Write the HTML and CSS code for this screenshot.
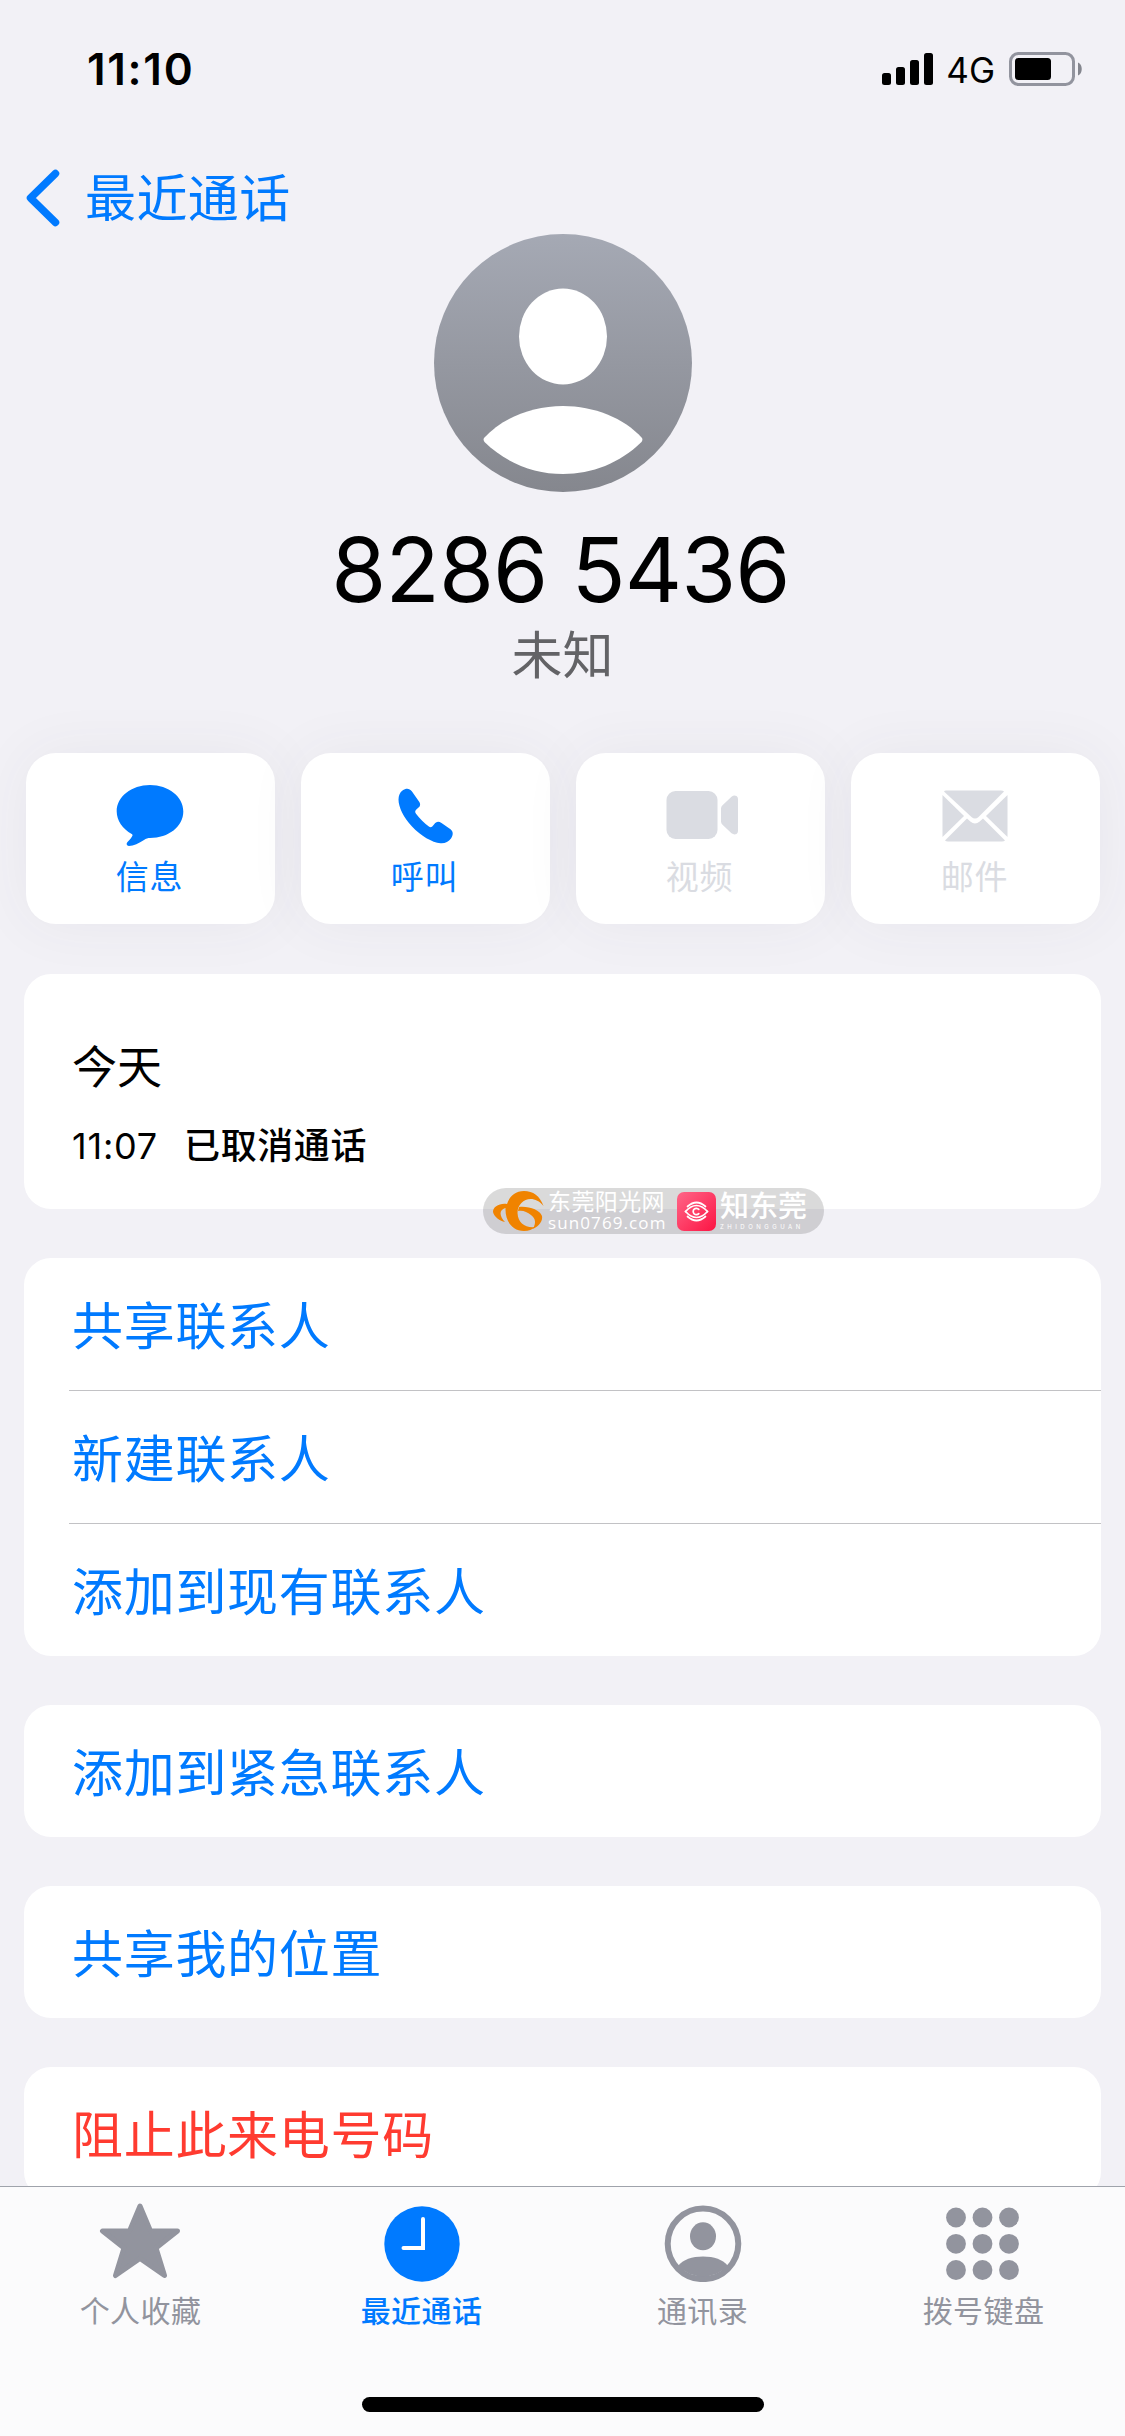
FILE: index.html
```html
<!DOCTYPE html>
<html lang="zh-CN">
<head>
  <meta charset="UTF-8">
  <meta name="viewport" content="width=device-width, initial-scale=1.0">
  <title>最近通话</title>
  <link rel="stylesheet" href="styles.css">
</head>
<body>
  <div class="phone">
    <header class="status-bar">
      <span class="time">11:10</span>
      <div class="status-icons">
        <svg class="signal" width="51" height="32" viewBox="0 0 51 32">
          <rect x="0" y="20" width="9" height="12" rx="2.5"/>
          <rect x="14" y="14" width="9" height="18" rx="2.5"/>
          <rect x="28" y="7" width="9" height="25" rx="2.5"/>
          <rect x="42" y="0" width="9" height="32" rx="2.5"/>
        </svg>
        <span class="network">4G</span>
        <svg class="battery" width="74" height="34" viewBox="0 0 74 34">
          <rect x="1.5" y="1.5" width="63" height="31" rx="8" fill="none" stroke="#92949e" stroke-width="3"/>
          <rect x="6" y="6" width="36" height="22" rx="3.5"/>
          <path d="M69 10.5c5 2 5 11 0 13z" fill="#84868e"/>
        </svg>
      </div>
    </header>

    <nav class="nav-bar">
      <svg width="34" height="58" viewBox="0 0 34 58">
        <path d="M29.5 4.5L4.5 29L29.5 53.5" fill="none" stroke="#007aff" stroke-width="7.5" stroke-linecap="round" stroke-linejoin="round"/>
      </svg>
      <a href="#">最近通话</a>
    </nav>

    <section class="profile">
      <svg class="avatar" width="258" height="258" viewBox="0 0 258 258">
        <defs>
          <linearGradient id="avatar-bg" x1="0" y1="0" x2="0" y2="1">
            <stop offset="0" stop-color="#a5a9b4"/>
            <stop offset="1" stop-color="#85878e"/>
          </linearGradient>
        </defs>
        <circle cx="129" cy="129" r="129" fill="url(#avatar-bg)"/>
        <ellipse cx="129" cy="102.5" rx="44" ry="48" fill="#fff"/>
        <path d="M50 204C68 184 98 172 129 172C160 172 190 184 208 204Q209 206 207.5 208C186 229 158 240 129 240C100 240 72 229 50.5 208Q49 206 50 204Z" fill="#fff"/>
      </svg>
      <h1>8286 5436</h1>
      <p>未知</p>
    </section>

    <section class="actions">
      <button class="action">
        <svg width="72" height="64" viewBox="0 0 72 64">
          <path d="M36 1C54.5 1 69.3 12.5 69.3 27.5S54.5 54 36 54C34 54 32 54.5 30 56C25 59.5 19.5 61.7 15 61.9C12.6 62 12 59.8 13.3 58.3C16 55.5 18 53 18.5 51.5C18.7 50.7 18.3 50.3 17.7 49.9C8.5 45 2.7 36.5 2.7 27.5C2.7 12.5 17.5 1 36 1Z"/>
        </svg>
        <span>信息</span>
      </button>
      <button class="action">
        <svg width="72" height="64" viewBox="0 0 72 64">
          <path d="M13.5 6.5C17 4 20.5 4.2 22.8 7.3L30 17.5C32 20.5 31.2 22.5 28.7 24.3C26 26.3 25.5 27.5 27 29.7C30.5 34.5 35.5 39.5 40.2 42.7C42 43.8 43.2 43 45 40.6C47.2 37.6 49.3 37 52.5 39L61.5 45.3C64.5 47.5 64.3 51.5 62 54.5C59.5 58 56 59.5 51.5 59.2C43 58.5 32 52 23 42.5C14.5 33.5 9.5 23 9.5 15.5C9.5 11.5 11 8.3 13.5 6.5Z"/>
        </svg>
        <span>呼叫</span>
      </button>
      <button class="action disabled">
        <svg width="76" height="64" viewBox="0 0 76 64">
          <rect x="4.5" y="7" width="51" height="48" rx="9"/>
          <path d="M59 24.5Q59 22.5 60.5 21.2L69.5 12.7Q72 10.8 74.5 12Q76 13 76 15V47Q76 49 74.5 50Q72 51.2 69.5 49.3L60.5 40.8Q59 39.5 59 37.5Z"/>
        </svg>
        <span>视频</span>
      </button>
      <button class="action disabled">
        <svg width="72" height="64" viewBox="0 0 72 64">
          <path d="M7 6.5H62Q64 6.5 65 7.5L39.5 33Q36 36 32.5 33L5 7.5Q5.5 6.5 7 6.5Z"/>
          <path d="M3.5 11L25 32L3.5 53Z"/>
          <path d="M68.5 11L47 32L68.5 53Z"/>
          <path d="M28 34.5L31.3 37.6Q36 41.5 40.7 37.6L44 34.5L66 56.5Q65 57.5 63 57.5H9Q7 57.5 6 56.5Z"/>
        </svg>
        <span>邮件</span>
      </button>
    </section>

    <main class="content">
      <section class="card history">
        <h2>今天</h2>
        <div class="call">
          <span class="call-time">11:07</span>
          <span class="call-type">已取消通话</span>
        </div>
      </section>

      <ul class="card list">
        <li>共享联系人</li>
        <li>新建联系人</li>
        <li>添加到现有联系人</li>
      </ul>
      <ul class="card list">
        <li>添加到紧急联系人</li>
      </ul>
      <ul class="card list">
        <li>共享我的位置</li>
      </ul>
      <ul class="card list">
        <li class="danger">阻止此来电号码</li>
      </ul>
    </main>

    <div class="watermark">
      <svg width="53" height="42" viewBox="0 0 53 42">
        <path d="M51.5 16C48 6 41 1 32 1C23 1 17 7 15 14C7 13 1 17 1 22C2 27 8 31 13 32C8 27 6 20 13.500 18C13 31 20 41 32 41C37 41 40 39.500 43 37C33 38 26 33 25.500 23C25.500 10 41 3 51.500 16Z" fill="#f08300"/>
        <path d="M27 17C37 16 48 20 50 26C51 31 47 36 41 39C44 33 44 29 39 25C35 22 31 20 26 21Z" fill="#f08300"/>
      </svg>
      <div class="brand sun">
        <b>东莞阳光网</b>
        <span>sun0769.com</span>
      </div>
      <svg class="eye" width="39" height="39" viewBox="0 0 39 39">
        <defs>
          <linearGradient id="eye-bg" x1="0" y1="0" x2="1" y2="1">
            <stop offset="0" stop-color="#ff6688"/>
            <stop offset="1" stop-color="#fc1443"/>
          </linearGradient>
        </defs>
        <rect width="39" height="39" rx="7" fill="url(#eye-bg)"/>
        <g fill="none" stroke="#fff" stroke-width="1.7" stroke-linecap="round">
          <path d="M10.5 14.5Q19.500 6.500 28.500 14.500"/>
          <path d="M8.500 19.500Q19.500 7.500 30.500 19.500"/>
          <path d="M8.500 19.500Q19.500 31.500 30.500 19.500"/>
          <path d="M10.500 24.500Q19.500 32.500 28.500 24.500"/>
          <path d="M21.800 17.400A3.200 3.200 0 1 0 21.800 21.600"/>
        </g>
      </svg>
      <div class="brand zhi">
        <b>知东莞</b>
        <span>ZHIDONGGUAN</span>
      </div>
    </div>

    <footer class="tab-bar">
      <div class="tabs">
        <a class="tab" href="#">
          <svg width="84" height="80" viewBox="1 1 84 80">
            <path d="M42 5L52.5 30H79.5L58 47L66.5 74.5L42 57.5L17.5 74.5L26 47L4.5 30H31.5Z" stroke="currentColor" stroke-width="5" stroke-linejoin="round"/>
          </svg>
          <span>个人收藏</span>
        </a>
        <a class="tab active" href="#">
          <svg width="84" height="80" viewBox="0 0 84 80">
            <circle cx="42" cy="42" r="37.7"/>
            <path d="M43 17V46H23.5" fill="none" stroke="#fff" stroke-width="4" stroke-linecap="round"/>
          </svg>
          <span>最近通话</span>
        </a>
        <a class="tab" href="#">
          <svg width="84" height="80" viewBox="0 0 84 80">
            <circle cx="42" cy="41.8" r="35.3" fill="none" stroke="currentColor" stroke-width="6"/>
            <ellipse cx="42" cy="34.3" rx="13" ry="14"/>
            <path d="M17 64C22 57.5 31 54.5 42 54.5S62 57.5 67 64A35.3 35.3 0 0 1 17 64Z"/>
          </svg>
          <span>通讯录</span>
        </a>
        <a class="tab" href="#">
          <svg width="84" height="80" viewBox="1.5 0 84 80">
            <circle cx="15.5" cy="15.5" r="9.9"/><circle cx="42" cy="15.5" r="9.9"/><circle cx="68.5" cy="15.5" r="9.9"/>
            <circle cx="15.5" cy="41.8" r="9.9"/><circle cx="42" cy="41.8" r="9.9"/><circle cx="68.5" cy="41.8" r="9.9"/>
            <circle cx="15.5" cy="68" r="9.9"/><circle cx="42" cy="68" r="9.9"/><circle cx="68.5" cy="68" r="9.9"/>
          </svg>
          <span>拨号键盘</span>
        </a>
      </div>
      <div class="home-indicator"></div>
    </footer>
  </div>
</body>
</html>
```
FILE: styles.css
```css
* {
  box-sizing: border-box;
  margin: 0;
  padding: 0;
}

body {
  font-family: Inter, "Noto Sans CJK SC", sans-serif;
  background: #f2f1f6;
  color: #000;
}

a {
  color: inherit;
  text-decoration: none;
}

svg {
  display: block;
  flex: none;
}

.phone {
  position: relative;
  width: 1125px;
  height: 2436px;
  overflow: hidden;
}

/* status bar */
.status-bar {
  display: flex;
  justify-content: space-between;
  height: 138px;
  padding: 0 42px 0 87px;
}
.time {
  padding-top: 41px;
  font-size: 44px;
  font-weight: 600;
  line-height: 56px;
  letter-spacing: 1.7px;
}
.status-icons {
  display: flex;
  align-items: center;
  height: 138px;
}
.network {
  margin: 2px 14px 0 13px;
  font-size: 35px;
  line-height: 40px;
}

.nav-bar {
  display: flex;
  align-items: center;
  height: 96px;
  padding-left: 26px;
  color: #007aff;
}
.nav-bar svg {
  margin-top: 24px;
}
.nav-bar a {
  margin: 26px 0 0 25px;
  font-size: 51px;
  line-height: 60px;
  letter-spacing: 0.4px;
}

/* avatar and number */
.profile {
  display: flex;
  flex-direction: column;
  align-items: center;
  height: 519px;
}
.profile h1 {
  margin: 24px 0 0 -4px;
  font-size: 89px;
  font-weight: 400;
  line-height: 108px;
  letter-spacing: -0.9px;
}
.profile p {
  margin-top: 2px;
  font-size: 51px;
  line-height: 60px;
  color: #636366;
}

.actions {
  display: grid;
  grid-template-columns: repeat(4, 249px);
  gap: 26px;
  padding-left: 25.5px;
}
.action {
  display: flex;
  flex-direction: column;
  align-items: center;
  height: 171px;
  padding-top: 31px;
  border: none;
  border-radius: 30px;
  background: #fff;
  box-shadow: 0 0 60px rgba(60, 60, 90, 0.06);
  font-family: inherit;
  font-size: 33px;
  color: #007aff;
}
.action svg {
  fill: currentColor;
}
.action span {
  margin: 7px 1px 0 0;
  line-height: 44px;
  letter-spacing: 0.8px;
}
.action.disabled {
  color: #dadce2;
}

/* cards */
.content {
  display: flex;
  flex-direction: column;
  gap: 49px;
  padding: 50px 24px 0;
}
.card {
  border-radius: 27px;
  background: #fff;
}
.history {
  height: 235px;
  padding: 64px 48px 0;
}
.history h2 {
  font-size: 45px;
  font-weight: 400;
  line-height: 60px;
}
.call {
  display: flex;
  gap: 26px;
  margin-top: 24px;
  font-size: 36px;
  line-height: 48px;
}
.call-time {
  letter-spacing: 0.8px;
}
.call-type {
  font-weight: 500;
  letter-spacing: 0.6px;
}

.list {
  padding-left: 45px;
  list-style: none;
}
.list li {
  height: 132px;
  padding: 3px 0 0 3px;
  font-size: 51px;
  line-height: 131px;
  letter-spacing: 0.7px;
  color: #007aff;
}
.list li + li {
  height: 133px;
  border-top: 1px solid #c2c2c5;
}
.list .danger {
  color: #ff3b30;
}

.watermark {
  position: absolute;
  left: 483px;
  top: 1188px;
  display: flex;
  align-items: center;
  width: 341px;
  height: 46px;
  padding-left: 9px;
  border-radius: 23px;
  background: rgba(0, 0, 0, 0.145);
  color: #fff;
}
.brand {
  display: flex;
  flex-direction: column;
  white-space: nowrap;
}
.sun {
  width: 118px;
  margin: -2px 0 0 3px;
}
.sun b {
  font-size: 23px;
  font-weight: 400;
  line-height: 25px;
  letter-spacing: 0.4px;
}
.sun span {
  font-family: "Open Sans", sans-serif;
  font-size: 17px;
  line-height: 16px;
  letter-spacing: 1.1px;
}
.eye {
  margin: 0 4px 0 11px;
}
.zhi b {
  font-size: 29px;
  font-weight: 500;
  line-height: 30px;
}
.zhi span {
  font-size: 6px;
  line-height: 9px;
  letter-spacing: 3.5px;
}

/* bottom tabs */
.tab-bar {
  position: absolute;
  left: 0;
  bottom: 0;
  width: 100%;
  height: 250px;
  border-top: 1px solid #9fa3ab;
  background: #fbfbfc;
}
.tabs {
  display: grid;
  grid-template-columns: repeat(4, 281px);
  height: 210px;
}
.tab {
  display: flex;
  flex-direction: column;
  align-items: center;
  padding-top: 15px;
  font-size: 30px;
  color: #92949e;
}
.tab svg {
  fill: currentColor;
}
.tab span {
  margin-top: 9px;
  line-height: 40px;
  letter-spacing: 0.4px;
}
.tab.active {
  color: #007aff;
}
.tab.active span {
  font-weight: 500;
}
.home-indicator {
  width: 402px;
  height: 15px;
  margin: 0 auto;
  border-radius: 8px;
  background: #000;
}
```
